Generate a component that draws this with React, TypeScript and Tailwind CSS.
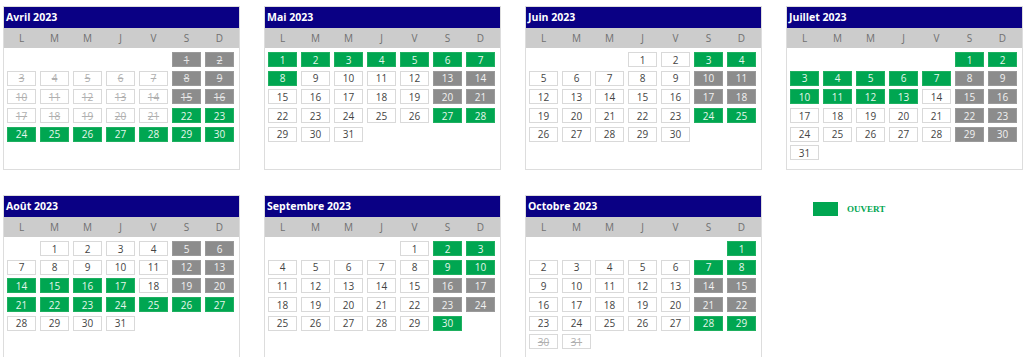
import React from "react";

type Month = {
  name: string;
  offset: number;
  days: string;
};

// g = ouvert, w = libre, c = week-end fermé, p = passé, q = week-end passé
const months: Month[] = [
  { name: "Avril 2023", offset: 5, days: "qqpppppqqpppppqqpppppggggggggg" },
  { name: "Mai 2023", offset: 0, days: "ggggggggwwwwccwwwwwccwwwwwggwww" },
  { name: "Juin 2023", offset: 3, days: "wwggwwwwwccwwwwwccwwwwwggwwwww" },
  { name: "Juillet 2023", offset: 5, days: "gggggggccggggwccwwwwwccwwwwwccw" },
  { name: "Août 2023", offset: 1, days: "wwwwccwwwwwccggggwccgggggggwwww" },
  { name: "Septembre 2023", offset: 4, days: "wggwwwwwggwwwwwccwwwwwccwwwwwg" },
  { name: "Octobre 2023", offset: 6, days: "gwwwwwggwwwwwccwwwwwccwwwwwggpp" },
];

const dayNames = ["L", "M", "M", "J", "V", "S", "D"];

const cellStyles: Record<string, string> = {
  g: "border-[#1fb060] bg-[#00a651] text-[#e6f7ec]",
  w: "border-[#d9d9d9] bg-white text-[#444]",
  c: "border-[#9a9a9a] bg-[#8c8c8c] text-[#f2f2f2]",
  p: "border-[#d9d9d9] bg-white text-[#b0b0b0] line-through",
  q: "border-[#9a9a9a] bg-[#8c8c8c] text-[#e6e6e6] line-through",
};

const DayCell: React.FC<{ day: number; status: string }> = ({ day, status }) => (
  <div
    className={`flex h-[15px] items-center justify-center border text-[10px] leading-none ${cellStyles[status]}`}
  >
    {day}
  </div>
);

const MonthCard: React.FC<{ month: Month }> = ({ month }) => {
  const blanks = Array.from({ length: month.offset });
  return (
    <div className="h-[164px] w-[237px] overflow-hidden border border-[#dddddd] bg-white">
      <div className="flex h-[21px] items-center bg-[#0a0084] pl-[2px] text-[10.5px] font-bold text-white">
        {month.name}
      </div>
      <div className="grid h-[20px] grid-cols-7 items-center gap-x-[4px] bg-[#cccccc] pl-[3px] pr-[5px] text-[10px] text-[#707070]">
        {dayNames.map((d, i) => (
          <div key={i} className="text-center">
            {d}
          </div>
        ))}
      </div>
      <div className="grid grid-cols-7 gap-x-[4px] gap-y-[3.7px] pl-[3px] pr-[5px] pt-[4px]">
        {blanks.map((_, i) => (
          <div key={`b${i}`} />
        ))}
        {month.days.split("").map((s, i) => (
          <DayCell key={i} day={i + 1} status={s} />
        ))}
      </div>
    </div>
  );
};

export default function App() {
  return (
    <div
      className="h-[357px] w-[1024px] overflow-hidden bg-white pl-[3px] pt-[6px]"
      style={{ fontFamily: '"Open Sans", "Noto Sans", sans-serif' }}
    >
      <div className="grid grid-cols-[repeat(4,237px)] gap-x-[24px] gap-y-[25px]">
        {months.map((m) => (
          <MonthCard key={m.name} month={m} />
        ))}
        <div className="flex items-start gap-[9px] pl-[27px] pt-[7px]">
          <div className="h-[14px] w-[25px] bg-[#00a651]" />
          <span
            className="text-[9px] font-bold leading-[14px] text-[#00a651]"
            style={{ fontFamily: '"Liberation Serif", serif' }}
          >
            OUVERT
          </span>
        </div>
      </div>
    </div>
  );
}
